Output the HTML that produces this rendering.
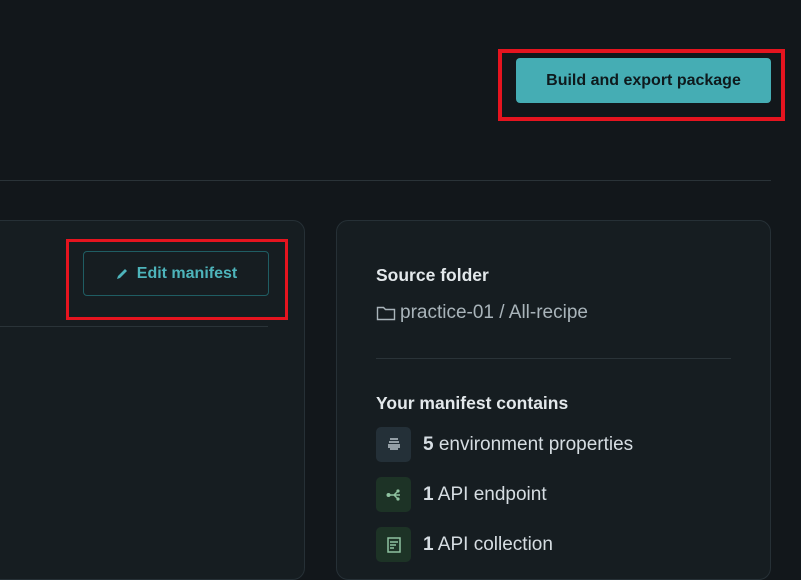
<!DOCTYPE html>
<html><head><style>
*{box-sizing:border-box;margin:0;padding:0}
body{width:801px;height:555px;overflow:hidden;background:#12171b;font-family:"Liberation Sans",sans-serif;position:relative;color:#d6dde2}
.abs{position:absolute}
.btn{left:516px;top:58px;width:255px;height:45px;background:#45adb4;border-radius:4px;color:#0e1a1d;font-size:16px;font-weight:bold;display:flex;align-items:center;justify-content:center}
.red{border:4px solid #e5141f}
.card{background:#161d21;border:1px solid #263036;border-radius:12px}
.edit{left:83px;top:251px;width:186px;height:45px;border:1px solid #1f5d63;border-radius:4px;color:#4db4bb;font-size:16px;font-weight:bold;display:flex;align-items:center;justify-content:center;gap:8px}
.h{font-size:17.5px;font-weight:bold;color:#e3e8eb}
.item{left:376px;display:flex;align-items:center;gap:12px;font-size:19px;color:#d6dde2}
.ic{width:35px;height:35px;border-radius:5px;display:flex;align-items:center;justify-content:center}
</style></head><body>
<div class="abs btn">Build and export package</div>
<div class="abs red" style="left:498px;top:49px;width:287px;height:72px"></div>
<div class="abs" style="left:0;top:180px;width:771px;height:1px;background:#2a3338"></div>
<div class="abs card" style="left:-20px;top:220px;width:325px;height:360px"></div>
<div class="abs edit"><svg width="14" height="14" viewBox="0 0 14 14"><path d="M2 12l1-3 7-7 2 2-7 7z" fill="#4db4bb"/></svg>Edit manifest</div>
<div class="abs red" style="left:66px;top:239px;width:222px;height:81px;border-width:3px"></div>
<div class="abs" style="left:0;top:326px;width:268px;height:1px;background:#2a3338"></div>
<div class="abs card" style="left:336px;top:220px;width:435px;height:360px"></div>
<div class="abs h" style="left:376px;top:265px">Source folder</div>
<div class="abs" style="left:376px;top:302px;font-size:19px;color:#a9b4ba;display:flex;align-items:center;gap:4px"><svg width="20" height="16" viewBox="0 0 20 16"><path d="M1.5 2.5h6l2 2h9v10h-17z" fill="none" stroke="#a9b4ba" stroke-width="1.4"/></svg>practice-01 / All-recipe</div>
<div class="abs" style="left:376px;top:358px;width:355px;height:1px;background:#2a3338"></div>
<div class="abs h" style="left:376px;top:393px">Your manifest contains</div>
<div class="abs item" style="top:427px"><div class="ic" style="background:#243038"><svg width="16" height="14" viewBox="0 0 16 14"><path d="M4 1h8M3 4h10M2 7h12M2 9h12M4 11h8" stroke="#b9c4ca" stroke-width="1.5"/></svg></div><span><b>5</b> environment properties</span></div>
<div class="abs item" style="top:477px"><div class="ic" style="background:#1d3326"><svg width="16" height="16" viewBox="0 0 16 16"><path d="M2 8h12M8 8l4-4M8 8l4 4" stroke="#8fc2a0" stroke-width="1.5" fill="none"/><circle cx="2.5" cy="8" r="2" fill="#8fc2a0"/><circle cx="12" cy="4" r="1.6" fill="#8fc2a0"/><circle cx="12" cy="12" r="1.6" fill="#8fc2a0"/></svg></div><span><b>1</b> API endpoint</span></div>
<div class="abs item" style="top:527px"><div class="ic" style="background:#1d3326"><svg width="16" height="16" viewBox="0 0 16 16"><rect x="2" y="1" width="12" height="14" fill="none" stroke="#8fc2a0" stroke-width="1.5"/><path d="M4 5h8M4 8h6M4 11h4" stroke="#8fc2a0" stroke-width="1.5"/></svg></div><span><b>1</b> API collection</span></div>
</body></html>
